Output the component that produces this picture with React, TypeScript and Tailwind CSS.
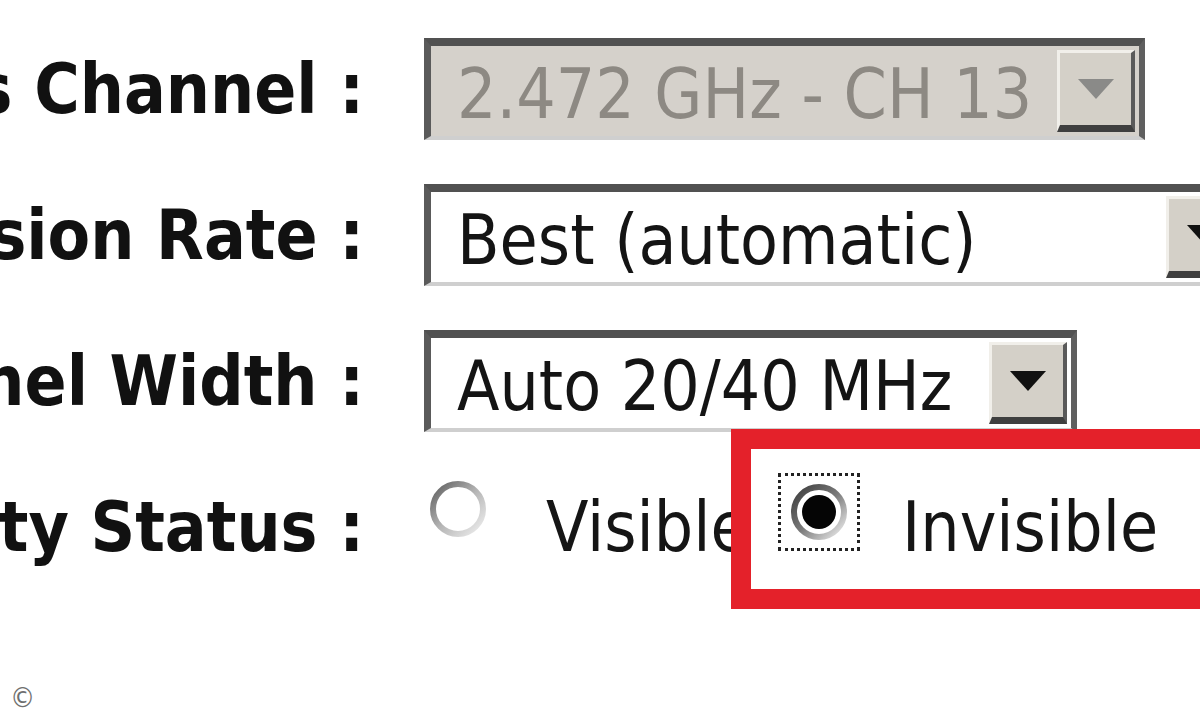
import React from 'react';

const FONT = "font-['DejaVu_Sans','Liberation_Sans',sans-serif] [font-stretch:condensed]";

interface SelectProps {
  value: string;
  widthClass: string;
  disabled?: boolean;
}

const Arrow: React.FC<{ disabled?: boolean }> = ({ disabled }) => (
  <div className="flex w-[78px] shrink-0 items-center justify-center border-t-[3px] border-l-[3px] border-b-[7px] border-r-[4px] border-t-[#f1efea] border-l-[#f1efea] border-b-[#3f3f3f] border-r-[#5a5a5a] bg-[#d4d0c8] my-[4px] mr-[4px]">
    <svg width="40" height="24" viewBox="0 0 40 24">
      <path d="M2 2 L38 2 L20 22 Z" fill={disabled ? '#8a8a88' : '#111'} />
    </svg>
  </div>
);

const Select: React.FC<SelectProps> = ({ value, widthClass, disabled }) => (
  <div
    className={`flex h-[102px] shrink-0 items-stretch border-t-[8px] border-l-[7px] border-r-[6px] border-b-[4px] border-t-[#515151] border-l-[#5a5a5a] border-r-[#5f5f5f] border-b-[#cfcfcf] ${widthClass} ${disabled ? 'bg-[#d5d1cb]' : 'bg-white'}`}
  >
    <div
      className={`flex flex-1 items-center overflow-hidden whitespace-nowrap pl-[26px] pt-[6px] text-[69px] leading-none ${disabled ? 'text-[#8d8983]' : 'text-[#141414]'}`}
    >
      {value}
    </div>
    <Arrow disabled={disabled} />
  </div>
);

const Label: React.FC<{ text: string }> = ({ text }) => (
  <div className="flex w-[364px] shrink-0 justify-end whitespace-nowrap text-[69px] font-bold leading-none text-[#111]">
    {text}
  </div>
);

const Radio: React.FC<{ checked?: boolean }> = ({ checked }) => (
  <svg width="64" height="64" viewBox="0 0 64 64">
    <defs>
      <linearGradient id={checked ? 'rg-on' : 'rg-off'} x1="0" y1="0" x2="1" y2="1">
        <stop offset="0" stopColor={checked ? '#3c3c3c' : '#5e5e5e'} />
        <stop offset="0.5" stopColor={checked ? '#7a7a7a' : '#b5b5b5'} />
        <stop offset="1" stopColor="#f0f0f0" />
      </linearGradient>
    </defs>
    <circle cx="32" cy="32" r="25" fill="white" stroke={`url(#${checked ? 'rg-on' : 'rg-off'})`} strokeWidth="6" />
    {checked && <circle cx="32" cy="32" r="17" fill="#050505" />}
  </svg>
);

export default function App() {
  return (
    <div className={`relative flex h-[720px] w-[1200px] flex-col overflow-hidden bg-white ${FONT}`}>
      <div className="flex flex-col gap-[44px] pt-[38px]">
        <div className="flex items-center">
          <Label text="Wireless Channel :" />
          <div className="ml-[60px]">
            <Select value="2.472 GHz - CH 13" widthClass="w-[721px]" disabled />
          </div>
        </div>

        <div className="flex items-center">
          <Label text="Transmission Rate :" />
          <div className="ml-[60px]">
            <Select value="Best (automatic)" widthClass="w-[830px]" />
          </div>
        </div>

        <div className="flex items-center">
          <Label text="Channel Width :" />
          <div className="ml-[60px]">
            <Select value="Auto 20/40 MHz" widthClass="w-[653px]" />
          </div>
        </div>

        <div className="flex h-[102px] items-center">
          <Label text="Visibility Status :" />
          <div className="ml-[60px] flex items-center">
            <div className="-mt-[36px] ml-[2px]">
              <Radio />
            </div>
            <span className="ml-[56px] w-[232px] whitespace-nowrap text-[69px] leading-none text-[#151515]">Visible</span>
            <div className="relative flex items-center">
              <div className="absolute -left-[47px] -top-[64px] h-[180px] w-[520px] border-[20px] border-[#e4212a] bg-white" />
              <div className="relative -mt-[30px] flex h-[78px] w-[82px] items-center justify-center border-[3px] border-dotted border-[#222]">
                <Radio checked />
              </div>
              <span className="relative ml-[42px] whitespace-nowrap text-[69px] leading-none text-[#151515]">Invisible</span>
            </div>
          </div>
        </div>
      </div>

      <div className="mt-auto pb-[8px] pl-[10px] text-[28px] leading-none text-[#6f6f6f]">©</div>
    </div>
  );
}
